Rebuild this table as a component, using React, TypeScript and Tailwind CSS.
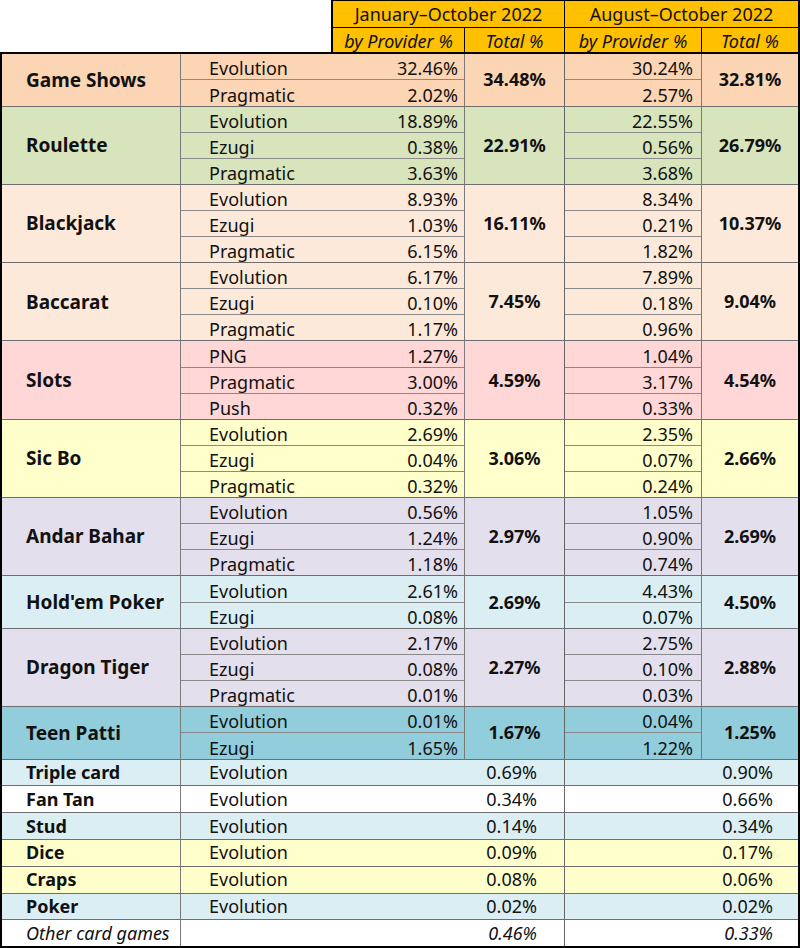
import React from 'react';

type Group = {
  name: string;
  bg: string;
  flex: string;
  rows: [string, string, string][];
  t1: string;
  t2: string;
};

type Single = {
  name: string;
  bg: string;
  provider: string;
  v1: string;
  v2: string;
  italic?: boolean;
};

const groups: Group[] = [
  { name: 'Game Shows', bg: 'bg-[#FCD5B4]', flex: 'flex-[2_1_0%]', rows: [['Evolution', '32.46%', '30.24%'], ['Pragmatic', '2.02%', '2.57%']], t1: '34.48%', t2: '32.81%' },
  { name: 'Roulette', bg: 'bg-[#D8E4BC]', flex: 'flex-[3_1_0%]', rows: [['Evolution', '18.89%', '22.55%'], ['Ezugi', '0.38%', '0.56%'], ['Pragmatic', '3.63%', '3.68%']], t1: '22.91%', t2: '26.79%' },
  { name: 'Blackjack', bg: 'bg-[#FDE9D9]', flex: 'flex-[3_1_0%]', rows: [['Evolution', '8.93%', '8.34%'], ['Ezugi', '1.03%', '0.21%'], ['Pragmatic', '6.15%', '1.82%']], t1: '16.11%', t2: '10.37%' },
  { name: 'Baccarat', bg: 'bg-[#FDE9D9]', flex: 'flex-[3_1_0%]', rows: [['Evolution', '6.17%', '7.89%'], ['Ezugi', '0.10%', '0.18%'], ['Pragmatic', '1.17%', '0.96%']], t1: '7.45%', t2: '9.04%' },
  { name: 'Slots', bg: 'bg-[#FFD7D7]', flex: 'flex-[3_1_0%]', rows: [['PNG', '1.27%', '1.04%'], ['Pragmatic', '3.00%', '3.17%'], ['Push', '0.32%', '0.33%']], t1: '4.59%', t2: '4.54%' },
  { name: 'Sic Bo', bg: 'bg-[#FFFFCC]', flex: 'flex-[3_1_0%]', rows: [['Evolution', '2.69%', '2.35%'], ['Ezugi', '0.04%', '0.07%'], ['Pragmatic', '0.32%', '0.24%']], t1: '3.06%', t2: '2.66%' },
  { name: 'Andar Bahar', bg: 'bg-[#E4DFEC]', flex: 'flex-[3_1_0%]', rows: [['Evolution', '0.56%', '1.05%'], ['Ezugi', '1.24%', '0.90%'], ['Pragmatic', '1.18%', '0.74%']], t1: '2.97%', t2: '2.69%' },
  { name: "Hold'em Poker", bg: 'bg-[#DAEEF3]', flex: 'flex-[2_1_0%]', rows: [['Evolution', '2.61%', '4.43%'], ['Ezugi', '0.08%', '0.07%']], t1: '2.69%', t2: '4.50%' },
  { name: 'Dragon Tiger', bg: 'bg-[#E4DFEC]', flex: 'flex-[3_1_0%]', rows: [['Evolution', '2.17%', '2.75%'], ['Ezugi', '0.08%', '0.10%'], ['Pragmatic', '0.01%', '0.03%']], t1: '2.27%', t2: '2.88%' },
  { name: 'Teen Patti', bg: 'bg-[#92CDDC]', flex: 'flex-[2_1_0%]', rows: [['Evolution', '0.01%', '0.04%'], ['Ezugi', '1.65%', '1.22%']], t1: '1.67%', t2: '1.25%' },
];

const singles: Single[] = [
  { name: 'Triple card', bg: 'bg-[#DAEEF3]', provider: 'Evolution', v1: '0.69%', v2: '0.90%' },
  { name: 'Fan Tan', bg: 'bg-white', provider: 'Evolution', v1: '0.34%', v2: '0.66%' },
  { name: 'Stud', bg: 'bg-[#DAEEF3]', provider: 'Evolution', v1: '0.14%', v2: '0.34%' },
  { name: 'Dice', bg: 'bg-[#FFFFCC]', provider: 'Evolution', v1: '0.09%', v2: '0.17%' },
  { name: 'Craps', bg: 'bg-[#FFFFCC]', provider: 'Evolution', v1: '0.08%', v2: '0.06%' },
  { name: 'Poker', bg: 'bg-[#DAEEF3]', provider: 'Evolution', v1: '0.02%', v2: '0.02%' },
  { name: 'Other card games', bg: 'bg-white', provider: '', v1: '0.46%', v2: '0.33%', italic: true },
];

function GroupRow({ g }: { g: Group }) {
  return (
    <div className={`flex ${g.flex} min-h-0 border-b border-[#6e6e6e] ${g.bg}`}>
      <div className="w-[179px] shrink-0 border-r border-[#7a7a7a] flex items-center pl-[24px] font-bold text-[19px]">
        {g.name}
      </div>
      <div className="w-[284px] shrink-0 border-r border-[#7a7a7a] flex flex-col">
        {g.rows.map((r, i) => (
          <div
            key={i}
            className={`flex-1 min-h-0 flex items-end pb-[2px] justify-between pl-[28px] pr-[6px] leading-none ${i < g.rows.length - 1 ? 'border-b border-[#8a8a8a]' : ''}`}
          >
            <span>{r[0]}</span>
            <span>{r[1]}</span>
          </div>
        ))}
      </div>
      <div className="w-[100px] shrink-0 border-r border-[#666666] flex items-center justify-center font-bold">
        {g.t1}
      </div>
      <div className="w-[137px] shrink-0 border-r border-[#7a7a7a] flex flex-col">
        {g.rows.map((r, i) => (
          <div
            key={i}
            className={`flex-1 min-h-0 flex items-end pb-[2px] justify-end pr-[8px] leading-none ${i < g.rows.length - 1 ? 'border-b border-[#8a8a8a]' : ''}`}
          >
            <span>{r[2]}</span>
          </div>
        ))}
      </div>
      <div className="flex-1 flex items-center justify-center font-bold">{g.t2}</div>
    </div>
  );
}

function SingleRow({ s, last }: { s: Single; last: boolean }) {
  return (
    <div className={`flex flex-[1_1_0%] min-h-0 ${last ? '' : 'border-b border-[#6e6e6e]'} ${s.bg}`}>
      <div className={`w-[179px] shrink-0 border-r border-[#7a7a7a] flex items-center pl-[24px] ${s.italic ? 'italic' : 'font-bold'}`}>
        {s.name}
      </div>
      <div className="w-[384px] shrink-0 border-r border-[#666666] flex items-center justify-between pl-[28px] pr-[27px]">
        <span>{s.provider}</span>
        <span className={s.italic ? 'italic' : ''}>{s.v1}</span>
      </div>
      <div className="flex-1 flex items-center justify-end pr-[25px]">
        <span className={s.italic ? 'italic' : ''}>{s.v2}</span>
      </div>
    </div>
  );
}

export default function App() {
  return (
    <div
      className="w-[800px] h-[948px] bg-white text-[#111111] text-[18px] overflow-hidden"
      style={{ fontFamily: '"Noto Sans", "Open Sans", sans-serif' }}
    >
      <div className="flex h-[54px]">
        <div className="w-[331px] shrink-0 border-b-2 border-black bg-white" />
        <div className="flex-1 flex bg-[#FFC000] border-l-2 border-t border-r-2 border-b-2 border-black">
          <div className="w-[232px] shrink-0 flex flex-col border-r border-black">
            <div className="h-[27px] shrink-0 border-b border-black flex items-center justify-center">
              January–October 2022
            </div>
            <div className="flex-1 flex italic">
              <div className="w-[132px] shrink-0 border-r border-black flex items-center justify-center">by Provider %</div>
              <div className="flex-1 flex items-center justify-center">Total %</div>
            </div>
          </div>
          <div className="flex-1 flex flex-col">
            <div className="h-[27px] shrink-0 border-b border-black flex items-center justify-center">
              August–October 2022
            </div>
            <div className="flex-1 flex italic">
              <div className="w-[137px] shrink-0 border-r border-black flex items-center justify-center">by Provider %</div>
              <div className="flex-1 flex items-center justify-center">Total %</div>
            </div>
          </div>
        </div>
      </div>
      <div className="h-[894px] flex flex-col border-l-2 border-r-2 border-b-2 border-black">
        {groups.map((g) => (
          <GroupRow key={g.name} g={g} />
        ))}
        {singles.map((s, i) => (
          <SingleRow key={s.name} s={s} last={i === singles.length - 1} />
        ))}
      </div>
    </div>
  );
}
